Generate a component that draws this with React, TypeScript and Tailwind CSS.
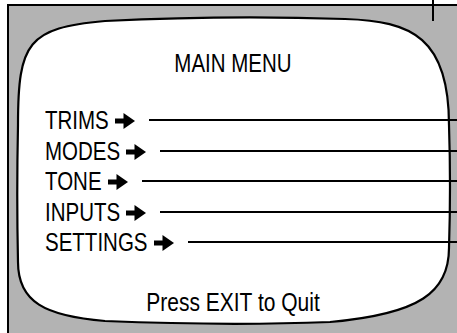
const menuItems = ['TRIMS', 'MODES', 'TONE', 'INPUTS', 'SETTINGS'];

const Arrow = () => (
  <svg width="20" height="16" viewBox="0 0 20 16" className="shrink-0 translate-y-[1px]">
    <path d="M0 5.5 H8.5 V0 L20 8 L8.5 16 V10.5 H0 Z" fill="#000" />
  </svg>
);

// screen outline, drawn in page coordinates
const ScreenShape = () => (
  <svg
    width="457"
    height="333"
    viewBox="0 0 457 333"
    className="absolute -left-[9px] -top-[6px] pointer-events-none"
  >
    <path
      d="M18 262 Q16.5 195 18 125 C18 42 28 28 105 21 Q227 15 345 19 C412 21 449 38 449 125 Q451 187 449 248 C449 292 420 314 330 322 Q227 326 105 321 C45 316 18 302 18 262 Z"
      fill="#fff"
      stroke="#000"
      strokeWidth="2.2"
    />
  </svg>
);

const MenuRow = ({ label }: { label: string }) => (
  <div className="flex items-center h-[30.5px]">
    <span className="inline-block leading-[24px] text-[20.5px] [transform:scaleY(1.245)] whitespace-nowrap">
      {label}
    </span>
    <span className="ml-[6px] flex items-center">
      <Arrow />
    </span>
    <div className="ml-[14px] flex-1 h-[2px] bg-black" />
  </div>
);

export default function App() {
  return (
    <div
      className="relative w-[457px] h-[333px] bg-white overflow-hidden pl-[7px] pt-[4px] text-black"
      style={{ fontFamily: '"Liberation Sans", Arial, sans-serif' }}
    >
      <div className="relative h-full border-l-2 border-t-2 border-black bg-[#b3b3b3]">
        <ScreenShape />
        <div className="relative flex flex-col">
          <div className="mt-[45px] text-center">
            <span className="inline-block leading-[24px] text-[20.5px] [transform:scaleY(1.245)]">MAIN MENU</span>
          </div>
          <div className="mt-[28px] pl-[36px] flex flex-col">
            {menuItems.map((item) => (
              <MenuRow key={item} label={item} />
            ))}
          </div>
          <div className="mt-[32px] text-center">
            <span className="inline-block leading-[24px] text-[21px] [transform:scaleY(1.22)]">Press EXIT to Quit</span>
          </div>
        </div>
      </div>
      <div className="absolute left-[432px] top-0 w-[2px] h-[21px] bg-black" />
    </div>
  );
}
